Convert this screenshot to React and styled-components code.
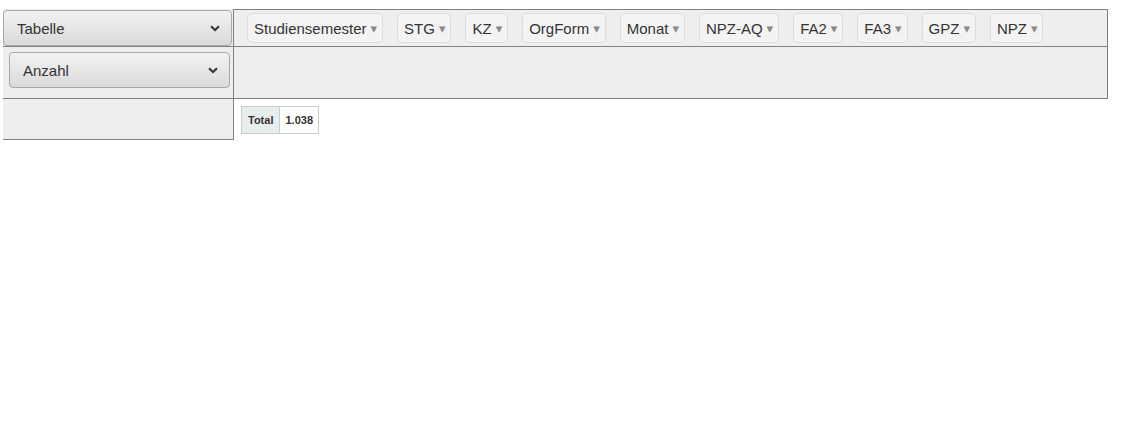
import React from "react";
import styled, { createGlobalStyle } from "styled-components";

const GlobalStyle = createGlobalStyle`
  body {
    margin: 0;
    background: #fff;
    font-family: "Liberation Sans", Arial, sans-serif;
    color: #333;
  }
`;

const attributes = [
  "Studiensemester",
  "STG",
  "KZ",
  "OrgForm",
  "Monat",
  "NPZ-AQ",
  "FA2",
  "FA3",
  "GPZ",
  "NPZ",
];

const Page = styled.div`
  padding: 9px 0 0 3px;
`;

const Ui = styled.div`
  display: grid;
  grid-template-columns: 231px 874px;
  grid-template-rows: 38px 52px 41px;
  width: 1105px;
`;

const LeftCell = styled.div`
  background: #eeeeee;
  border-right: 1px solid #808080;
  border-bottom: 1px solid #808080;
  display: flex;
  align-items: flex-start;
  padding: ${(p) => p.pad || "0"};
`;

const AxisCell = styled.div`
  background: #eeeeee;
  border-top: ${(p) => (p.top ? "1px solid #808080" : "none")};
  border-right: 1px solid #808080;
  border-bottom: 1px solid #808080;
  display: flex;
  align-items: center;
  gap: 14px;
  padding: 0 13px;
`;

const OutputCell = styled.div`
  padding: 7px 0 0 7px;
`;

const Select = styled.div`
  box-sizing: border-box;
  width: ${(p) => p.w}px;
  height: ${(p) => p.h}px;
  margin-top: ${(p) => p.mt || 0}px;
  border: 1px solid #a9a9a9;
  border-radius: 4px;
  background: linear-gradient(#f2f2f2, #dadada);
  display: flex;
  align-items: center;
  justify-content: space-between;
  padding: 0 11px 0 13px;
  font-size: 15px;
  color: #333;
`;

const Chevron = () => (
  <svg width="10" height="7" viewBox="0 0 10 7">
    <path d="M1 1.2 L5 5 L9 1.2" fill="none" stroke="#333" strokeWidth="2" />
  </svg>
);

const Chip = styled.div`
  box-sizing: border-box;
  height: 30px;
  display: flex;
  align-items: center;
  padding: 0 5px 0 6px;
  background: #f3f3f3;
  border: 1px solid #dddddd;
  border-radius: 5px;
  font-size: 15px;
  color: #333;
  white-space: nowrap;
`;

const Triangle = styled.span`
  color: #888;
  font-size: 13px;
  margin-left: 4px;
  font-family: "DejaVu Sans", sans-serif;
`;

const PvtTable = styled.table`
  border-collapse: collapse;
  font-family: "Liberation Sans", Arial, sans-serif;
  font-size: 11px;
  font-weight: bold;
  color: #333;

  th,
  td {
    border: 1px solid #cdcdcd;
    line-height: 14px;
    text-align: left;
  }

  th {
    background: #e6eeee;
    padding: 6px 6px;
  }

  td {
    background: #fff;
    padding: 6px 5px;
  }
`;

export default function App() {
  return (
    <Page>
      <GlobalStyle />
      <Ui>
        <LeftCell pad="1px 1px 0 0">
          <Select w={230} h={36}>
            Tabelle
            <Chevron />
          </Select>
        </LeftCell>
        <AxisCell top>
          {attributes.map((a) => (
            <Chip key={a}>
              {a}
              <Triangle>▾</Triangle>
            </Chip>
          ))}
        </AxisCell>
        <LeftCell pad="0 0 0 6px">
          <Select w={221} h={36} mt={5}>
            Anzahl
            <Chevron />
          </Select>
        </LeftCell>
        <AxisCell />
        <LeftCell />
        <OutputCell>
          <PvtTable>
            <tbody>
              <tr>
                <th>Total</th>
                <td>1.038</td>
              </tr>
            </tbody>
          </PvtTable>
        </OutputCell>
      </Ui>
    </Page>
  );
}
